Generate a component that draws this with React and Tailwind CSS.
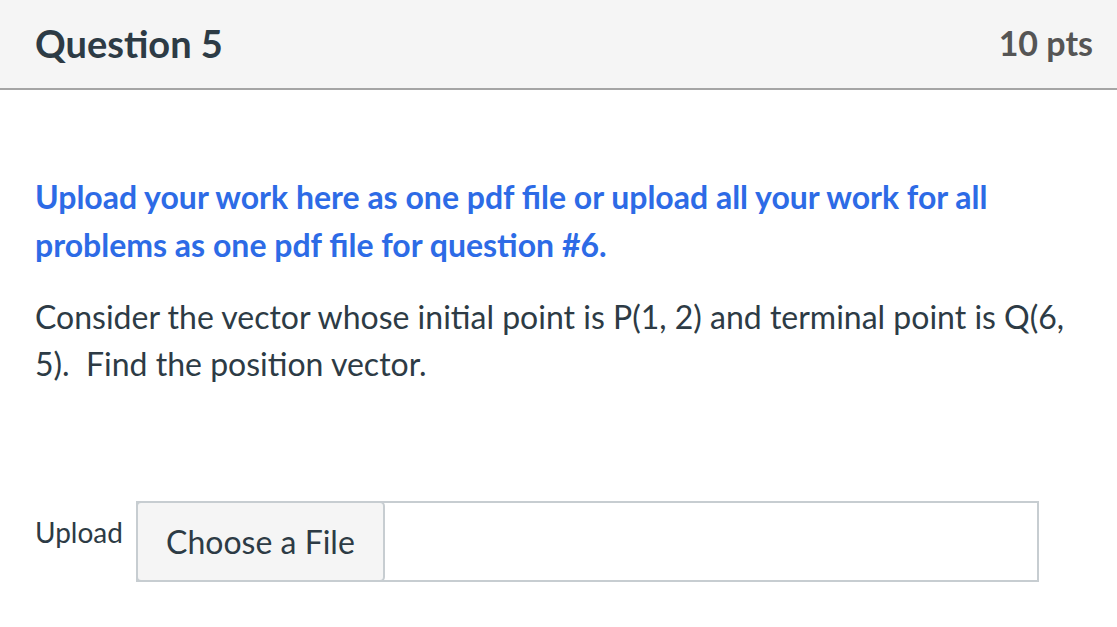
export default function App() {
  return (
    <div className="w-[1117px] h-[627px] bg-white overflow-hidden" style={{ fontFamily: "Lato, 'Noto Sans', sans-serif" }}>
      <div className="h-[90px] bg-[#f5f5f5] border-b-2 border-[#a5a5a5] flex items-center justify-between pl-[35px] pr-[24px]">
        <h2 className="text-[38px] font-bold text-[#2d3b45] leading-none -mt-[2px]">Question 5</h2>
        <div className="text-[34px] font-bold text-[#555555] leading-none -mt-[2px]">10 pts</div>
      </div>
      <div className="pl-[35px] pr-[20px] pt-[83px]">
        <p className="text-[32px] font-bold text-[#2d6be6] leading-[48px]">
          Upload your work here as one pdf file or upload all your work for all problems as one pdf file for question #6.
        </p>
        <p className="mt-[24px] text-[32px] text-[#2d3b45] leading-[47px]">
          Consider the vector whose initial point is P(1, 2) and terminal point is Q(6, 5).&nbsp; Find the position vector.
        </p>
        <div className="mt-[114px] flex items-start">
          <span className="text-[28px] text-[#2d3b45] leading-none mt-[17px] mr-[13px]">Upload</span>
          <div className="w-[903px] h-[81px] border-2 border-[#c7cdd1] flex">
            <div className="w-[249px] -m-[2px] h-[81px] border-2 border-[#c7cdd1] rounded-[5px] bg-[#f5f5f5] flex items-center justify-center">
              <span className="text-[32px] text-[#2d3b45]">Choose a File</span>
            </div>
          </div>
        </div>
      </div>
    </div>
  );
}
